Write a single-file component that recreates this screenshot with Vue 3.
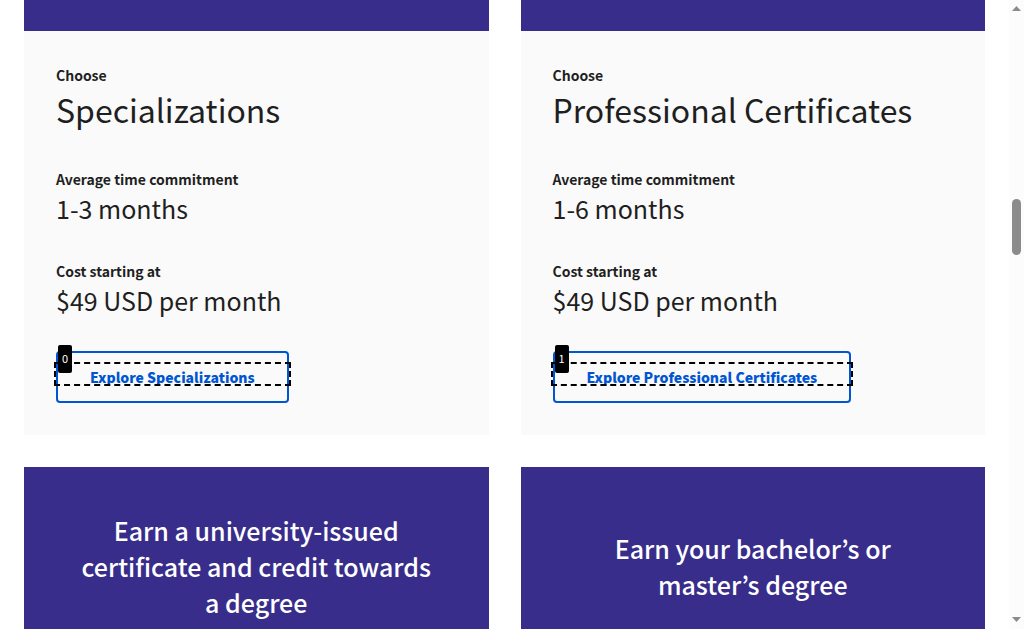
<script setup>
const cards = [
  {
    title: 'Specializations',
    time: '1-3 months',
    cost: '$49 USD per month',
    action: 'Explore Specializations',
  },
  {
    title: 'Professional Certificates',
    time: '1-6 months',
    cost: '$49 USD per month',
    action: 'Explore Professional Certificates',
  },
]
const goals = [
  'Earn a university-issued certificate and credit towards a degree',
  'Earn your bachelor’s or master’s degree',
]
</script>

<template>
  <div class="window" lang="en">
    <main class="page">
      <article v-for="(card, index) in cards" :key="card.title" class="card">
        <div class="banner banner-end"></div>
        <div class="body">
          <section class="fact">
            <p class="label">Choose</p>
            <h2 class="title">{{ card.title }}</h2>
          </section>
          <section class="fact">
            <p class="label">Average time commitment</p>
            <p class="value">{{ card.time }}</p>
          </section>
          <section class="fact">
            <p class="label">Cost starting at</p>
            <p class="value">{{ card.cost }}</p>
          </section>
          <a href="#" class="action">
            {{ card.action }}
            <span class="focus-box" aria-hidden="true"></span>
            <span class="marker" aria-hidden="true">{{ index }}</span>
          </a>
        </div>
      </article>
      <article v-for="goal in goals" :key="goal" class="card">
        <div class="banner">
          <h2 class="goal">{{ goal }}</h2>
        </div>
      </article>
    </main>
    <div class="scrollbar" aria-hidden="true">
      <svg class="arrow" viewBox="0 0 9 5"><path d="M4.500 0 9 5H0z" /></svg>
      <div class="track"><div class="thumb"></div></div>
      <svg class="arrow" viewBox="0 0 9 5"><path d="M0 0h9L4.500 5z" /></svg>
    </div>
  </div>
</template>

<style>
body {
  background: #fff;
}
</style>

<style scoped>
.window {
  display: flex;
  height: 100vh;
  overflow: hidden;
  color: #1f1f1f;
  font-family: "Source Sans Pro", "Noto Sans CJK KR", "Noto Sans", sans-serif;
}
.page {
  flex: 1;
  display: grid;
  grid-template-columns: repeat(2, minmax(0, 1fr));
  align-content: start;
  gap: 32px;
  padding: 0 24px;
}
.card {
  background: #fafafa;
}
.banner {
  display: flex;
  align-items: center;
  justify-content: center;
  box-sizing: border-box;
  min-height: 198px;
  padding: 0 48px;
  background: #382d8b;
}
.banner-end {
  min-height: 31px;
}
.body {
  padding: 32px;
}
.fact {
  margin-bottom: 32px;
}
.label,
.title,
.value,
.goal {
  margin: 0;
}
.label {
  font-size: 14px;
  line-height: 24px;
  font-weight: 600;
}
.title {
  padding-bottom: 4px;
  font-size: 32px;
  line-height: 44px;
  font-weight: 400;
}
.value {
  padding-bottom: 2px;
  font-size: 25px;
  line-height: 34px;
}
.goal {
  color: #fff;
  font-size: 25px;
  line-height: 36px;
  font-weight: 500;
  text-align: center;
}
.action {
  display: inline-block;
  vertical-align: top;
  position: relative;
  padding: 12px 32px;
  border: 2px solid #0056d2;
  border-radius: 4px;
  color: #0056d2;
  font-size: 14px;
  line-height: 24px;
  font-weight: 900;
  text-decoration: none;
}
.focus-box {
  position: absolute;
  top: 9px;
  left: -4px;
  right: -4px;
  height: 20px;
  border: 2px dashed #000;
}
.marker {
  position: absolute;
  top: -8px;
  left: 0;
  padding: 0 4px 2px;
  border-radius: 2px;
  background: #000;
  color: #fff;
  font-size: 11px;
  line-height: 26px;
  font-weight: 400;
}
.scrollbar {
  display: flex;
  flex-direction: column;
  align-items: center;
  box-sizing: border-box;
  width: 15px;
  padding: 6px 0 7px;
  background: #fcfcfc;
}
.arrow {
  width: 9px;
  height: 5px;
  fill: #8b8b8b;
}
.track {
  flex: 1;
  padding-top: 188px;
}
.thumb {
  width: 9px;
  height: 56px;
  border-radius: 5px;
  background: #8b8b8b;
}
</style>
